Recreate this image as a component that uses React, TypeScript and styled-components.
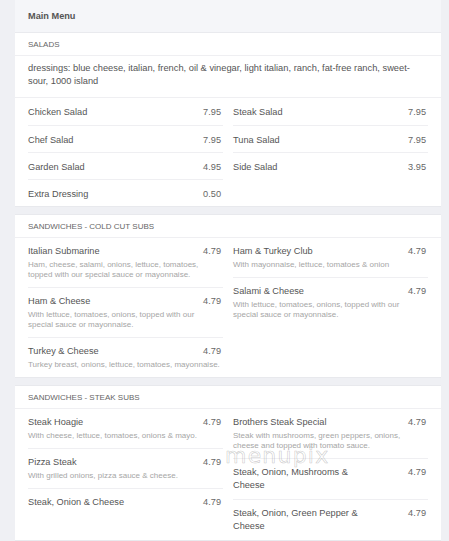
import React from "react";
import styled, { createGlobalStyle } from "styled-components";

const Global = createGlobalStyle`
  html, body { margin: 0; padding: 0; background: #eff0f4; }
  body { font-family: "Liberation Sans", Arial, sans-serif; }
`;

type Item = { name: string; price: string; desc?: string };

const saladsLeft: Item[] = [
  { name: "Chicken Salad", price: "7.95" },
  { name: "Chef Salad", price: "7.95" },
  { name: "Garden Salad", price: "4.95" },
  { name: "Extra Dressing", price: "0.50" },
];
const saladsRight: Item[] = [
  { name: "Steak Salad", price: "7.95" },
  { name: "Tuna Salad", price: "7.95" },
  { name: "Side Salad", price: "3.95" },
];

const coldLeft: Item[] = [
  { name: "Italian Submarine", price: "4.79", desc: "Ham, cheese, salami, onions, lettuce, tomatoes, topped with our special sauce or mayonnaise." },
  { name: "Ham & Cheese", price: "4.79", desc: "With lettuce, tomatoes, onions, topped with our special sauce or mayonnaise." },
  { name: "Turkey & Cheese", price: "4.79", desc: "Turkey breast, onions, lettuce, tomatoes, mayonnaise." },
];
const coldRight: Item[] = [
  { name: "Ham & Turkey Club", price: "4.79", desc: "With mayonnaise, lettuce, tomatoes & onion" },
  { name: "Salami & Cheese", price: "4.79", desc: "With lettuce, tomatoes, onions, topped with our special sauce or mayonnaise." },
];

const steakLeft: Item[] = [
  { name: "Steak Hoagie", price: "4.79", desc: "With cheese, lettuce, tomatoes, onions & mayo." },
  { name: "Pizza Steak", price: "4.79", desc: "With grilled onions, pizza sauce & cheese." },
  { name: "Steak, Onion & Cheese", price: "4.79" },
];
const steakRight: Item[] = [
  { name: "Brothers Steak Special", price: "4.79", desc: "Steak with mushrooms, green peppers, onions, cheese and topped with tomato sauce." },
  { name: "Steak, Onion, Mushrooms & Cheese", price: "4.79" },
  { name: "Steak, Onion, Green Pepper & Cheese", price: "4.79" },
];

const Page = styled.div`
  position: relative;
  width: 426px;
  margin-left: 15px;
  color: #555;
`;

const MainHeader = styled.div`
  height: 32px;
  display: flex;
  align-items: center;
  padding: 0 13px;
  background: #f5f6f9;
  border-bottom: 1px solid #e9eaee;
  font-size: 9.2px;
  font-weight: bold;
  color: #555;
`;

const Section = styled.section<{ $gap?: boolean }>`
  background: #fff;
  margin-top: ${(p) => (p.$gap ? "7px" : "0")};
  border-top: ${(p) => (p.$gap ? "1px solid #e8e9ed" : "none")};
  border-bottom: 1px solid #e8e9ed;
`;

const SectionTitle = styled.div`
  height: 22px;
  display: flex;
  align-items: center;
  padding: 0 13px;
  font-size: 8px;
  text-transform: uppercase;
  color: #666;
  border-bottom: 1px solid #efeff2;
`;

const Note = styled.p`
  margin: 0;
  padding: 6px 13px 9px;
  font-size: 9.3px;
  line-height: 13px;
  color: #555;
  border-bottom: 1px solid #efeff2;
`;

const Columns = styled.div`
  display: grid;
  grid-template-columns: 1fr 1fr;
  column-gap: 10px;
  padding: 0 13px;
  align-items: start;
`;

const Column = styled.div`
  display: flex;
  flex-direction: column;
`;

const SimpleRow = styled.div`
  box-sizing: border-box;
  height: 27px;
  display: flex;
  align-items: center;
  justify-content: space-between;
  font-size: 9.2px;
  color: #555;
  padding-right: 2px;
  & + & { border-top: 1px solid #efeff2; padding-top: 1px; }
`;

const DetailRow = styled.div`
  padding: 7px 2px 7px 0;
  & + & { border-top: 1px solid #efeff2; }
`;

const NameLine = styled.div`
  display: flex;
  justify-content: space-between;
  align-items: flex-start;
  font-size: 9.2px;
  line-height: 13px;
  color: #555;
`;

const Name = styled.span`
  max-width: 75%;
`;

const Price = styled.span`
  color: #666;
`;

const Desc = styled.div`
  margin-top: 2px;
  font-size: 8px;
  line-height: 10px;
  color: #a6a6a6;
`;

const Watermark = styled.div`
  position: absolute;
  left: 210px;
  top: 443px;
  font-family: "DejaVu Sans", sans-serif;
  font-size: 22px;
  line-height: 25px;
  letter-spacing: 1.2px;
  color: rgba(255, 255, 255, 0.15);
  -webkit-text-stroke: 0.6px rgba(140, 140, 140, 0.45);
  pointer-events: none;
`;

const Simple = ({ items }: { items: Item[] }) => (
  <Column>
    {items.map((it) => (
      <SimpleRow key={it.name}>
        <span>{it.name}</span>
        <Price>{it.price}</Price>
      </SimpleRow>
    ))}
  </Column>
);

const Detailed = ({ items }: { items: Item[] }) => (
  <Column>
    {items.map((it) => (
      <DetailRow key={it.name}>
        <NameLine>
          <Name>{it.name}</Name>
          <Price>{it.price}</Price>
        </NameLine>
        {it.desc && <Desc>{it.desc}</Desc>}
      </DetailRow>
    ))}
  </Column>
);

export default function App() {
  return (
    <>
      <Global />
      <Page>
        <MainHeader>Main Menu</MainHeader>
        <Section>
          <SectionTitle>Salads</SectionTitle>
          <Note>
            dressings: blue cheese, italian, french, oil &amp; vinegar, light italian, ranch, fat-free ranch, sweet-sour, 1000 island
          </Note>
          <Columns>
            <Simple items={saladsLeft} />
            <Simple items={saladsRight} />
          </Columns>
        </Section>
        <Section $gap>
          <SectionTitle>Sandwiches - Cold Cut Subs</SectionTitle>
          <Columns>
            <Detailed items={coldLeft} />
            <Detailed items={coldRight} />
          </Columns>
        </Section>
        <Section $gap>
          <SectionTitle>Sandwiches - Steak Subs</SectionTitle>
          <Columns>
            <Detailed items={steakLeft} />
            <Detailed items={steakRight} />
          </Columns>
        </Section>
        <Watermark>menupix</Watermark>
      </Page>
    </>
  );
}
